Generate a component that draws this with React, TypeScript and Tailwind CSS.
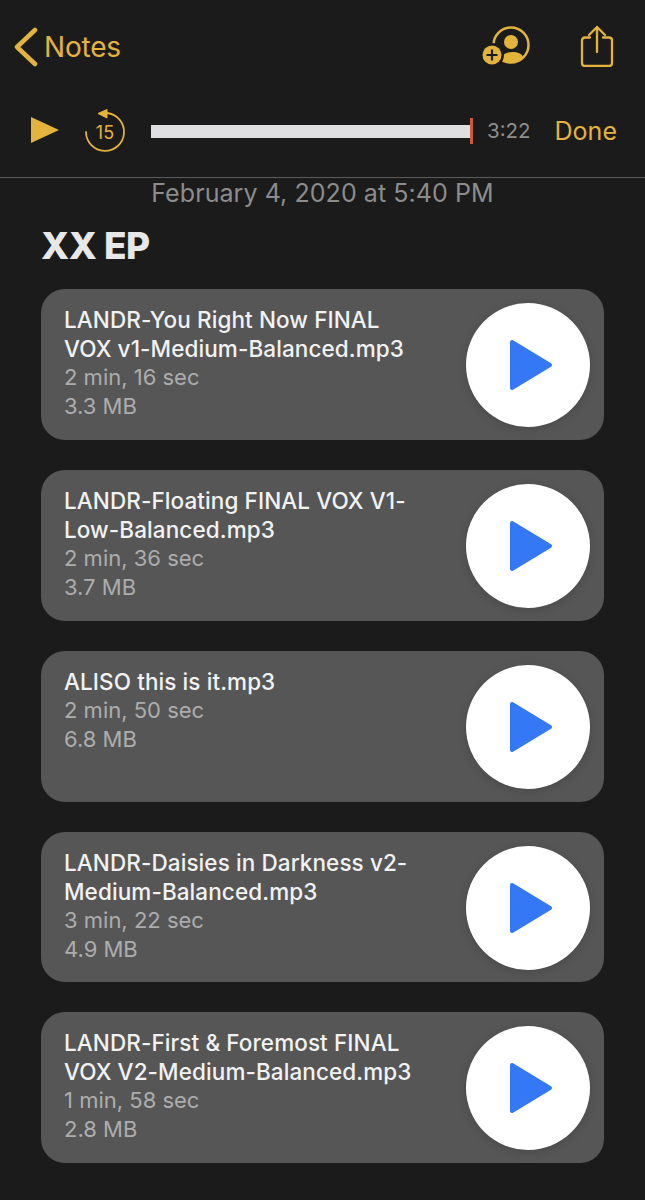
const font = { fontFamily: "Inter, 'Liberation Sans', sans-serif" };

const tracks = [
  { lines: ["LANDR-You Right Now FINAL", "VOX v1-Medium-Balanced.mp3"], time: "2 min, 16 sec", size: "3.3 MB", h: "h-[151px]" },
  { lines: ["LANDR-Floating FINAL VOX V1-", "Low-Balanced.mp3"], time: "2 min, 36 sec", size: "3.7 MB", h: "h-[151px]" },
  { lines: ["ALISO this is it.mp3"], time: "2 min, 50 sec", size: "6.8 MB", h: "h-[151px]" },
  { lines: ["LANDR-Daisies in Darkness v2-", "Medium-Balanced.mp3"], time: "3 min, 22 sec", size: "4.9 MB", h: "h-[150px]" },
  { lines: ["LANDR-First & Foremost FINAL", "VOX V2-Medium-Balanced.mp3"], time: "1 min, 58 sec", size: "2.8 MB", h: "h-[151px]" },
];

function Track({ t }: { t: (typeof tracks)[number] }) {
  return (
    <div className={`${t.h} flex items-start justify-between rounded-[24px] bg-[#565656] pl-[23px] pr-[14px] pt-[14px]`}>
      <div className="pt-[2px] text-[22px] leading-[29px]">
        {t.lines.map((l) => (
          <div key={l} className="text-[22.5px] font-medium tracking-[0.09px] text-[#f2f2f2]">{l}</div>
        ))}
        <div className="text-[#adadad]">{t.time}</div>
        <div className="text-[#adadad]">{t.size}</div>
      </div>
      <div className="flex h-[124px] w-[124px] shrink-0 items-center justify-center rounded-full bg-white shadow-[0_2px_10px_rgba(0,0,0,0.15)]">
        <svg width="44" height="52" viewBox="0 0 44 52" className="ml-[5px] -mt-[1px]">
          <path d="M3 3 L41 26 L3 49 Z" fill="#3478f6" stroke="#3478f6" strokeWidth="4" strokeLinejoin="round" />
        </svg>
      </div>
    </div>
  );
}

export default function App() {
  return (
    <div style={font} className="h-[1200px] w-[645px] overflow-hidden bg-[#1b1b1b]">
      <div className="flex h-[98px] items-start justify-between pl-[13px] pr-[31px] pt-[27px]">
        <div className="flex items-center gap-[5px] text-[#e3b33c]">
          <svg width="26" height="40" viewBox="0 0 26 40">
            <path d="M22 3 L4 20 L22 37" fill="none" stroke="#e3b33c" strokeWidth="4.5" strokeLinecap="round" strokeLinejoin="round" />
          </svg>
          <span className="text-[28px] leading-[40px] tracking-[-0.2px]">Notes</span>
        </div>
        <div className="flex items-start gap-[50px]">
          <svg width="48" height="42" viewBox="0 0 48 42" className="mt-[-1px]">
            <circle cx="29" cy="19" r="17.5" fill="none" stroke="#e3b33c" strokeWidth="2.5" />
            <circle cx="29" cy="16" r="7" fill="#e3b33c" />
            <path d="M19 33 C20 24 39 24 41 31 C37 35 33 37 29 37 C25 37 22 35.5 19 33 Z" fill="#e3b33c" />
            <circle cx="10" cy="29" r="12" fill="#1b1b1b" />
            <circle cx="10" cy="29" r="9.5" fill="#e3b33c" />
            <path d="M10 23.5 V34.5 M4.5 29 H15.5" stroke="#1b1b1b" strokeWidth="2.2" />
          </svg>
          <svg width="34" height="42" viewBox="0 0 34 42" className="-mt-[2px]">
            <path d="M10 12.5 H5 Q2 12.5 2 15.5 V38 Q2 41 5 41 H29 Q32 41 32 38 V15.5 Q32 12.5 29 12.5 H23" fill="none" stroke="#e3b33c" strokeWidth="2.3" strokeLinecap="round" />
            <path d="M17 2 V27 M9 10 L17 2 L25 10" fill="none" stroke="#e3b33c" strokeWidth="2.3" strokeLinecap="round" strokeLinejoin="round" />
          </svg>
        </div>
      </div>
      <div className="flex h-[80px] items-start border-b border-[#5c5c5c] pl-[30px] pt-[17px]">
        <svg width="30" height="30" viewBox="0 0 30 30" className="shrink-0">
          <path d="M1 2 L29 15 L1 28 Z" fill="#e3b33c" />
        </svg>
        <svg width="42" height="44" viewBox="0 0 42 44" className="-mt-[6px] ml-[24px] shrink-0">
          <path d="M23 4 A19 19 0 1 1 2 23" fill="none" stroke="#e3b33c" strokeWidth="1.8" strokeLinecap="round" />
          <path d="M23 0.5 L14 4.5 L23 9 Z" fill="#e3b33c" stroke="#e3b33c" strokeLinejoin="round" />
          <text x="21" y="30" textAnchor="middle" fontSize="18" fill="#e3b33c" fontFamily="Inter, sans-serif">15</text>
        </svg>
        <div className="ml-[25px] mt-[10px] h-[13px] w-[319px] shrink-0 bg-[#dfdfe1]" />
        <div className="mt-[3px] h-[26px] w-[3px] shrink-0 bg-[#cf5a3a]" />
        <div className="ml-[14px] mt-[3px] text-[20.5px] leading-[26px] text-[#8e8e8e]">3:22</div>
        <div className="ml-[24px] mt-[1px] text-[25px] leading-[30px] text-[#e3b33c]">Done</div>
      </div>
      <div className="mt-[1px] text-center text-[25px] leading-[29px] tracking-[0.07px] text-[#8c8c8c]">February 4, 2020 at 5:40 PM</div>
      <div className="ml-[41px] mt-[17px] text-[37px] font-extrabold leading-[42px] tracking-[-0.5px] text-[#e8e8e8]">XX EP</div>
      <div className="mx-[41px] mt-[22px] flex flex-col gap-[30px]">
        {tracks.map((t) => (
          <Track key={t.lines[0]} t={t} />
        ))}
      </div>
    </div>
  );
}
